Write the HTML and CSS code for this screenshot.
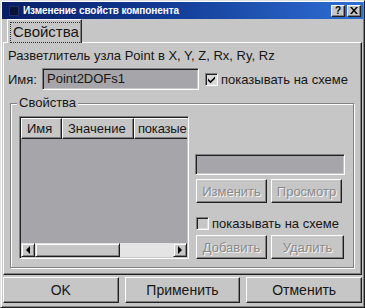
FILE: index.html
```html
<!DOCTYPE html>
<html lang="ru">
<head>
<meta charset="utf-8">
<title>Изменение свойств компонента</title>
<link rel="stylesheet" href="styles.css">
</head>
<body>
<div class="window">
  <div class="titlebar">
    <span class="appicon"></span>
    <span class="title">Изменение свойств компонента</span>
    <span class="tbtns">
      <span class="tbtn">?</span>
      <span class="tbtn">
        <svg width="8" height="7" viewBox="0 0 8 7"><path d="M0 0h2l2 2.5L6 0h2L5 3.5 8 7H6L4 4.5 2 7H0l3-3.5z" fill="#000"/></svg>
      </span>
    </span>
  </div>
  <div class="tabs">
    <div class="tab"><span class="focus">Свойства</span></div>
  </div>
  <div class="panel">
    <div class="desc">Разветлитель узла Point в X, Y, Z, Rx, Ry, Rz</div>
    <div class="namerow">
      <span class="namelbl">Имя:</span>
      <div class="field namefield">Point2DOFs1</div>
      <span class="check checked">
        <svg width="9" height="9" viewBox="0 0 9 9"><path d="M1 3.5l2.5 2.5L8 1.5v2.2L3.5 8.2 1 5.7z" fill="#000"/></svg>
      </span>
      <span class="chklbl">показывать на схеме</span>
    </div>
    <div class="group">
      <span class="legend">Свойства</span>
      <div class="listview">
        <div class="lvhead">
          <div class="hcol c1">Имя</div>
          <div class="hcol c2">Значение</div>
          <div class="hcol c3">показые</div>
        </div>
        <div class="lvbody"></div>
        <div class="hscroll">
          <div class="sbtn"><span class="arrow-l"></span></div>
          <div class="thumb"></div>
          <div class="track"></div>
          <div class="sbtn"><span class="arrow-r"></span></div>
        </div>
      </div>
      <div class="side">
        <div class="field editbox"></div>
        <div class="btnrow">
          <div class="btn disabled">Изменить</div>
          <div class="btn disabled">Просмотр</div>
        </div>
        <div class="chkrow">
          <span class="check"></span>
          <span class="chklbl">показывать на схеме</span>
        </div>
        <div class="btnrow">
          <div class="btn disabled">Добавить</div>
          <div class="btn disabled wide">Удалить</div>
        </div>
      </div>
    </div>
  </div>
  <div class="bottom">
    <div class="btn big">OK</div>
    <div class="btn big">Применить</div>
    <div class="btn big">Отменить</div>
  </div>
</div>
</body>
</html>
```

FILE: styles.css
```css
* { box-sizing: border-box; }

html, body {
  margin: 0;
  padding: 0;
  background: #c6c6c6;
}

body {
  font-family: "Liberation Sans", Arial, sans-serif;
  font-size: 13px;
  color: #161616;
}

.window {
  width: 365px;
  height: 308px;
  background: #c6c6c6;
  border-top: 1px solid #e0e0e0;
  border-left: 1px solid #e0e0e0;
  border-right: 1px solid #202020;
  border-bottom: 1px solid #202020;
  box-shadow: inset 1px 1px 0 #ffffff, inset -1px -1px 0 #808080;
  padding: 1px;
  display: flex;
  flex-direction: column;
}

/* Title bar */
.titlebar {
  height: 17px;
  flex: none;
  display: flex;
  align-items: center;
  background: linear-gradient(to right, #081f66 0%, #123b95 45%, #2e6fd4 100%);
  color: #fff;
  padding: 0 2px 0 7px;
}

.appicon {
  width: 10px;
  height: 10px;
  background: #0a1436;
  border: 1px solid #22306a;
  margin-right: 4px;
  flex: none;
}

.title {
  font-weight: bold;
  font-size: 10px;
  flex: 1;
  white-space: nowrap;
  letter-spacing: -0.1px;
}

.tbtns {
  display: flex;
  gap: 2px;
}

.tbtn {
  width: 14px;
  height: 12px;
  background: #c6c6c6;
  border-top: 1px solid #fff;
  border-left: 1px solid #fff;
  border-right: 1px solid #202020;
  border-bottom: 1px solid #202020;
  box-shadow: inset -1px -1px 0 #808080;
  color: #000;
  font-weight: bold;
  font-size: 10px;
  line-height: 10px;
  display: flex;
  align-items: center;
  justify-content: center;
}

/* Tabs */
.tabs {
  height: 23px;
  flex: none;
  display: flex;
  align-items: flex-end;
  padding-left: 5px;
}

.tab {
  position: relative;
  z-index: 1;
  width: 75px;
  height: 24px;
  margin-bottom: -1px;
  background: #c6c6c6;
  border-top: 1px solid #fff;
  border-left: 1px solid #fff;
  border-right: 1px solid #202020;
  box-shadow: inset -1px 0 0 #808080;
  padding: 2px 0 0 2px;
  font-size: 15px;
}

.focus {
  display: inline-block;
  border: 1px dotted #303030;
  padding: 0 2px 1px 2px;
  line-height: 18px;
}

/* Panel */
.panel {
  height: 233px;
  flex: none;
  margin: 0 0 0 1px;
  width: 359px;
  border-top: 1px solid #fff;
  border-left: 1px solid #fff;
  border-right: 1px solid #202020;
  border-bottom: 1px solid #202020;
  box-shadow: inset -1px -1px 0 #808080;
  padding: 5px 0 0 4px;
  display: flex;
  flex-direction: column;
}

.desc {
  line-height: 16px;
  height: 16px;
}

.namerow {
  margin-top: 4px;
  height: 22px;
  display: flex;
  align-items: center;
}

.namelbl {
  width: 34px;
}

.field {
  background: #a6a6aa;
  border-top: 1px solid #808080;
  border-left: 1px solid #808080;
  border-right: 1px solid #fff;
  border-bottom: 1px solid #fff;
  box-shadow: inset 1px 1px 0 #202020, inset -1px -1px 0 #c6c6c6;
}

.namefield {
  width: 157px;
  height: 22px;
  padding: 2px 0 0 4px;
  line-height: 16px;
}

.check {
  width: 13px;
  height: 13px;
  flex: none;
  background: #c6c6c6;
  border-top: 1px solid #808080;
  border-left: 1px solid #808080;
  border-right: 1px solid #fff;
  border-bottom: 1px solid #fff;
  box-shadow: inset 1px 1px 0 #202020, inset -1px -1px 0 #dcdcdc;
  display: flex;
  align-items: center;
  justify-content: center;
}

.check.checked {
  background: #d8d8d8;
  margin-left: 6px;
}

.chklbl {
  margin-left: 3px;
  white-space: nowrap;
}

/* Group box */
.group {
  position: relative;
  margin: 13px 0 0 2px;
  width: 344px;
  height: 165px;
  border: 1px solid #808080;
  box-shadow: inset 1px 1px 0 #fff, 1px 1px 0 #fff;
  display: flex;
  padding: 12px 0 0 8px;
  gap: 6px;
}

.legend {
  position: absolute;
  left: 6px;
  top: -9px;
  background: #c6c6c6;
  padding: 0 2px;
  line-height: 16px;
}

/* List view */
.listview {
  width: 170px;
  height: 143px;
  flex: none;
  border-top: 1px solid #808080;
  border-left: 1px solid #808080;
  border-right: 1px solid #fff;
  border-bottom: 1px solid #fff;
  box-shadow: inset 1px 1px 0 #202020, inset -1px -1px 0 #c6c6c6;
  padding: 1px;
  display: flex;
  flex-direction: column;
  overflow: hidden;
}

.lvhead {
  display: flex;
  height: 21px;
  flex: none;
  overflow: hidden;
}

.hcol {
  flex: none;
  height: 21px;
  background: #c6c6c6;
  border-top: 1px solid #fff;
  border-left: 1px solid #fff;
  border-right: 1px solid #202020;
  border-bottom: 1px solid #202020;
  box-shadow: inset -1px -1px 0 #808080;
  padding: 2px 0 0 5px;
  line-height: 16px;
  white-space: nowrap;
  overflow: hidden;
}

.c1 { width: 41px; }
.c2 { width: 72px; }
.c3 {
  flex: 1;
  border-right: none;
  box-shadow: inset 0 -1px 0 #808080;
  padding-left: 3px;
  letter-spacing: -0.2px;
}

.lvbody {
  flex: 1;
  background: #a6a6aa;
}

.hscroll {
  height: 14px;
  flex: none;
  display: flex;
  background: #e4e4e4;
}

.sbtn {
  width: 14px;
  height: 14px;
  flex: none;
  background: #c6c6c6;
  border-top: 1px solid #e0e0e0;
  border-left: 1px solid #e0e0e0;
  border-right: 1px solid #202020;
  border-bottom: 1px solid #202020;
  box-shadow: inset 1px 1px 0 #fff, inset -1px -1px 0 #808080;
  display: flex;
  align-items: center;
  justify-content: center;
}

.arrow-l {
  width: 0;
  height: 0;
  border-top: 4px solid transparent;
  border-bottom: 4px solid transparent;
  border-right: 4px solid #000;
}

.arrow-r {
  width: 0;
  height: 0;
  border-top: 4px solid transparent;
  border-bottom: 4px solid transparent;
  border-left: 4px solid #000;
}

.thumb {
  width: 85px;
  flex: none;
  background: #c6c6c6;
  border-top: 1px solid #e0e0e0;
  border-left: 1px solid #e0e0e0;
  border-right: 1px solid #202020;
  border-bottom: 1px solid #202020;
  box-shadow: inset 1px 1px 0 #fff, inset -1px -1px 0 #808080;
}

.track {
  flex: 1;
}

/* Side column */
.side {
  width: 150px;
  display: flex;
  flex-direction: column;
  padding-top: 38px;
}

.editbox {
  height: 21px;
  width: 150px;
}

.btnrow {
  display: flex;
  gap: 4px;
  margin-top: 4px;
  padding-left: 1px;
}

.btn {
  background: #c6c6c6;
  border-top: 1px solid #fff;
  border-left: 1px solid #fff;
  border-right: 1px solid #202020;
  border-bottom: 1px solid #202020;
  box-shadow: inset -1px -1px 0 #808080;
  display: flex;
  align-items: center;
  justify-content: center;
  white-space: nowrap;
}

.btnrow .btn {
  width: 71px;
  height: 24px;
}

.btnrow .btn.wide {
  width: 73px;
}

.btn.disabled {
  color: #8a8a8a;
  text-shadow: 1px 1px 0 #f4f4f4;
}

.chkrow {
  display: flex;
  align-items: center;
  margin-top: 13px;
  height: 14px;
  padding-left: 1px;
}

.chkrow + .btnrow {
  margin-top: 5px;
}

/* Bottom buttons */
.bottom {
  flex: none;
  display: flex;
  gap: 6px;
  margin: 2px 0 0 1px;
  width: 359px;
  height: 26px;
}

.btn.big {
  flex: 1;
  height: 26px;
  font-size: 14px;
}
```
